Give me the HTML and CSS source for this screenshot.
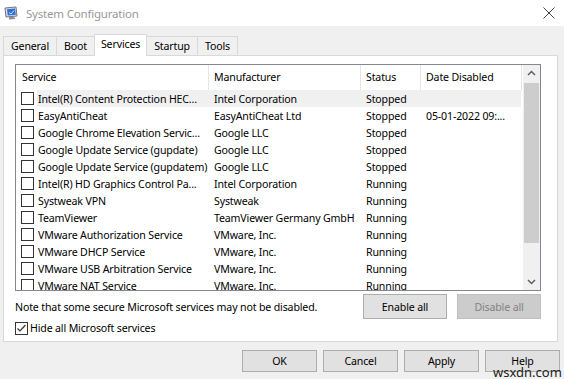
FILE: index.html
```html
<!DOCTYPE html>
<html>
  <head>
    <title>System Configuration</title>
    <link rel="stylesheet" href="styles.css">
  </head>

  <body>
    <div class="window">
      <div class="titlebar">
        <svg class="app-icon" width="14" height="14" viewBox="0 0 14 14">
          <path d="M1 2 L12 1 L13 10 L2 11 Z" fill="#d8dde4" stroke="#6d7480" stroke-width="1" />
          <path d="M3 3.3 L11 2.6 L11.8 8.8 L3.8 9.5 Z" fill="#2f6fd6" />
          <path d="M5 11 L10 10.5 L11 13 L5 13.5 Z" fill="#8a9099" />
          <path d="M5 6.5 L7 8 L10 4.5" fill="none" stroke="#cfe3ff" stroke-width="1" />
        </svg>
        <span class="title">System Configuration</span>
        <svg class="close" width="12" height="12" viewBox="0 0 12 12">
          <path d="M0.5 0.5 L11.5 11.5 M11.5 0.5 L0.5 11.5" stroke="#444" stroke-width="1" />
        </svg>
      </div>

      <div class="tabs">
        <div class="tab">General</div>
        <div class="tab">Boot</div>
        <div class="tab active">Services</div>
        <div class="tab">Startup</div>
        <div class="tab">Tools</div>
      </div>

      <div class="panel">
        <div class="list">
          <div class="list-body">
            <div class="list-head">
              <div class="head-cell first">Service</div>
              <div class="head-cell">Manufacturer</div>
              <div class="head-cell">Status</div>
              <div class="head-cell">Date Disabled</div>
            </div>

            <div class="row selected">
              <span class="box"></span>
              <span class="cell name">Intel(R) Content Protection HEC...</span>
              <span class="cell">Intel Corporation</span>
              <span class="cell">Stopped</span>
              <span class="cell"></span>
            </div>
            <div class="row">
              <span class="box"></span>
              <span class="cell name">EasyAntiCheat</span>
              <span class="cell">EasyAntiCheat Ltd</span>
              <span class="cell">Stopped</span>
              <span class="cell">05-01-2022 09:...</span>
            </div>
            <div class="row">
              <span class="box"></span>
              <span class="cell name">Google Chrome Elevation Servic...</span>
              <span class="cell">Google LLC</span>
              <span class="cell">Stopped</span>
              <span class="cell"></span>
            </div>
            <div class="row">
              <span class="box"></span>
              <span class="cell name">Google Update Service (gupdate)</span>
              <span class="cell">Google LLC</span>
              <span class="cell">Stopped</span>
              <span class="cell"></span>
            </div>
            <div class="row">
              <span class="box"></span>
              <span class="cell name">Google Update Service (gupdatem)</span>
              <span class="cell">Google LLC</span>
              <span class="cell">Stopped</span>
              <span class="cell"></span>
            </div>
            <div class="row">
              <span class="box"></span>
              <span class="cell name">Intel(R) HD Graphics Control Pa...</span>
              <span class="cell">Intel Corporation</span>
              <span class="cell">Running</span>
              <span class="cell"></span>
            </div>
            <div class="row">
              <span class="box"></span>
              <span class="cell name">Systweak VPN</span>
              <span class="cell">Systweak</span>
              <span class="cell">Running</span>
              <span class="cell"></span>
            </div>
            <div class="row">
              <span class="box"></span>
              <span class="cell name">TeamViewer</span>
              <span class="cell">TeamViewer Germany GmbH</span>
              <span class="cell">Running</span>
              <span class="cell"></span>
            </div>
            <div class="row">
              <span class="box"></span>
              <span class="cell name">VMware Authorization Service</span>
              <span class="cell">VMware, Inc.</span>
              <span class="cell">Running</span>
              <span class="cell"></span>
            </div>
            <div class="row">
              <span class="box"></span>
              <span class="cell name">VMware DHCP Service</span>
              <span class="cell">VMware, Inc.</span>
              <span class="cell">Running</span>
              <span class="cell"></span>
            </div>
            <div class="row">
              <span class="box"></span>
              <span class="cell name">VMware USB Arbitration Service</span>
              <span class="cell">VMware, Inc.</span>
              <span class="cell">Running</span>
              <span class="cell"></span>
            </div>
            <div class="row">
              <span class="box"></span>
              <span class="cell name">VMware NAT Service</span>
              <span class="cell">VMware, Inc.</span>
              <span class="cell">Running</span>
              <span class="cell"></span>
            </div>
          </div>

          <div class="scrollbar">
            <svg class="arrow" width="17" height="17" viewBox="0 0 17 17">
              <path d="M5 10 L8.5 6.5 L12 10" fill="none" stroke="#606060" stroke-width="1.5" />
            </svg>
            <div class="track"><div class="thumb"></div></div>
            <svg class="arrow" width="17" height="17" viewBox="0 0 17 17">
              <path d="M5 7 L8.5 10.5 L12 7" fill="none" stroke="#606060" stroke-width="1.5" />
            </svg>
          </div>
        </div>

        <div class="actions">
          <span class="note">Note that some secure Microsoft services may not be disabled.</span>
          <button class="btn wide push">Enable all</button>
          <button class="btn wide" disabled>Disable all</button>
        </div>

        <label class="hide-ms">
          <span class="box checked">
            <svg width="11" height="11" viewBox="0 0 11 11">
              <path d="M1.5 5.5 L4 8 L9.5 2" fill="none" stroke="#333" stroke-width="1.2" />
            </svg>
          </span>
          Hide all Microsoft services
        </label>
      </div>

      <div class="footer">
        <button class="btn">OK</button>
        <button class="btn">Cancel</button>
        <button class="btn">Apply</button>
        <button class="btn">Help</button>
      </div>

      <div class="watermark">wsxdn.com</div>
    </div>
  </body>
</html>
```

FILE: styles.css
```css
body {
  margin: 0;
  background-color: #f0f0f0;
  font-family: "Noto Sans", "Open Sans", sans-serif;
  font-size: 10.6px;
  letter-spacing: -0.15px;
  color: #000;
}

.window {
  position: relative;
  width: 564px;
  height: 379px;
  overflow: hidden;
}

.titlebar {
  height: 26px;
  background-color: #fff;
  display: flex;
  align-items: center;
  padding-left: 4px;
}

.title {
  margin-left: 8px;
  color: #999;
  font-size: 11.5px;
  letter-spacing: -0.2px;
}

.close {
  margin-left: auto;
  margin-right: 9px;
}

.tabs {
  height: 29px;
  display: flex;
  align-items: flex-end;
  padding-left: 3px;
}

.tab {
  height: 18px;
  line-height: 18px;
  padding: 0 7px;
  border: 1px solid #d9d9d9;
  border-bottom: none;
  margin-right: -1px;
  background-color: #f0f0f0;
}

.tab.active {
  position: relative;
  z-index: 1;
  height: 21px;
  line-height: 19px;
  margin-bottom: -1px;
  padding: 0 6px;
  background-color: #fff;
}

.panel {
  margin-left: 3px;
  width: 526px;
  height: 277px;
  padding: 8px 16px 0 11px;
  background-color: #fff;
  border: 1px solid #d9d9d9;
}

.list {
  display: flex;
  height: 225px;
  border: 1px solid #828790;
}

.list-body {
  flex: 1;
  overflow: hidden;
}

.list-head {
  display: grid;
  grid-template-columns: 193px 152px 60px 101px;
  height: 25px;
}

.head-cell {
  padding-left: 5px;
  line-height: 25px;
  border-right: 1px solid #e5e5e5;
}

.head-cell.first {
  padding-left: 6px;
}

.row {
  display: grid;
  grid-template-columns: 21px 172px 152px 60px 1fr;
  height: 17px;
  line-height: 16px;
  align-items: center;
}

.row.selected {
  background: linear-gradient(to right, transparent 21px, #f0f0f0 21px, #f0f0f0 505px, transparent 505px);
}

.cell {
  padding-left: 5px;
  white-space: nowrap;
  overflow: hidden;
}

.cell.name {
  padding-left: 1px;
}

.box {
  width: 11px;
  height: 11px;
  margin-left: 5px;
  border: 1px solid #333;
  background-color: #fff;
}

.scrollbar {
  width: 17px;
  display: flex;
  flex-direction: column;
  background-color: #f0f0f0;
}

.arrow {
  display: block;
}

.track {
  flex: 1;
  padding: 1px 1px 0;
}

.thumb {
  height: 160px;
  background-color: #cdcdcd;
}

.actions {
  display: flex;
  align-items: center;
  gap: 10px;
  margin-top: 3px;
}

.push {
  margin-left: auto;
}

.btn {
  width: 75px;
  height: 22px;
  padding: 0;
  font: inherit;
  letter-spacing: inherit;
  color: #000;
  background-color: #e1e1e1;
  border: 1px solid #adadad;
}

.btn.wide {
  width: 84px;
  height: 25px;
}

.btn:disabled {
  background-color: #cccccc;
  border-color: #bfbfbf;
  color: #838383;
}

.hide-ms {
  display: flex;
  align-items: center;
  gap: 2px;
  margin-top: 2px;
}

.hide-ms .box {
  margin-left: 0;
  display: flex;
  align-items: center;
  justify-content: center;
}

.footer {
  display: flex;
  gap: 6px;
  margin-top: 8px;
  padding-left: 242px;
}

.watermark {
  position: absolute;
  left: 493px;
  top: 363px;
  font-size: 13px;
  letter-spacing: 0;
  color: #222;
}
```
